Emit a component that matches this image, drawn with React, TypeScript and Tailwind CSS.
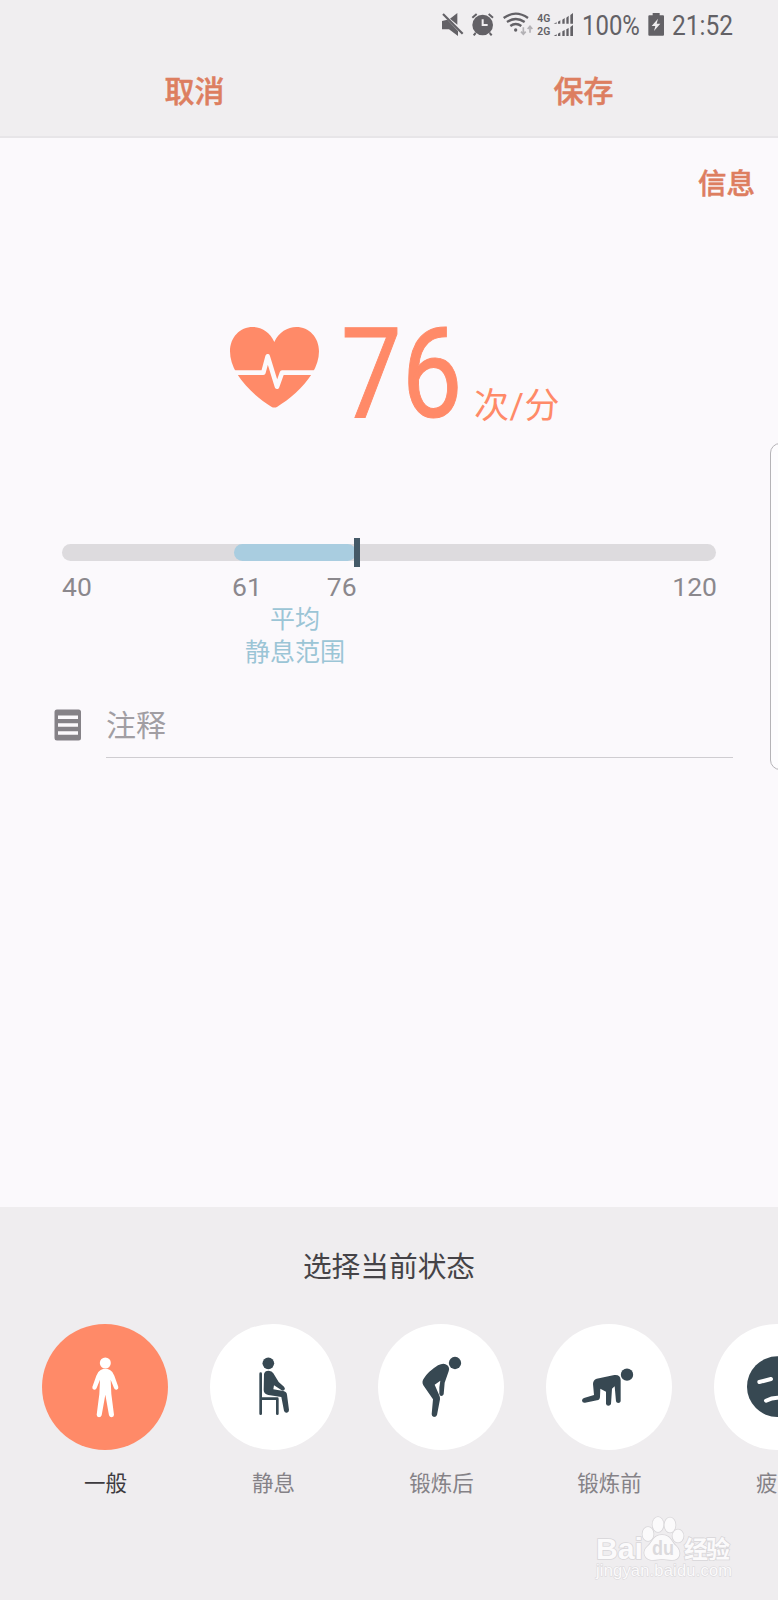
import { useState } from "react";
import type { ReactNode } from "react";

type Status = {
  id: string;
  label: string;
  icon: ReactNode;
};

const MIN = 40;
const MAX = 120;

const statuses: Status[] = [
  {
    id: "general",
    label: "一般",
    icon: (
      <>
        <circle cx="190" cy="117" r="16.5" />
        <path d="M176 138Q190 131 204 138Q212 142 217 155L229 189Q230 196 224 197Q218 198 216 192L206 167L208 210L216 272Q216 279 209 280Q203 280 201 274L190 212L179 274Q177 280 171 280Q164 279 164 272L172 210L174 167L164 192Q162 198 156 197Q150 196 151 189L163 155Q168 142 176 138Z" />
      </>
    ),
  },
  {
    id: "resting",
    label: "静息",
    icon: (
      <>
        <circle cx="175" cy="118" r="17.5" />
        <path d="M162 150Q164 140 176 140Q186 140 190 148L206 174L222 188Q227 193 223 198Q219 201 214 198L192 184L190 196L220 201Q230 203 231 212L237 258Q237 265 231 266Q224 267 222 260L214 219L175 213Q161 210 161 198Z" />
        <path d="M152 149V269M152 224H202V269" fill="none" stroke="currentColor" strokeWidth="8" strokeLinecap="round" strokeLinejoin="round" />
      </>
    ),
  },
  {
    id: "after",
    label: "锻炼后",
    icon: (
      <>
        <circle cx="231" cy="117" r="18.5" />
        <path d="M180 124Q198 115 208 124Q216 131 212 142L200 176L197 211Q195 216 190 216Q185 216 184 210L184 190L187 170L170 182L183 212Q187 219 186 226L177 273Q175 279 168 279Q161 278 161 271L165 226L136 184Q130 174 138 163Q150 143 180 124Z" />
      </>
    ),
  },
  {
    id: "before",
    label: "锻炼前",
    icon: (
      <>
        <circle cx="243" cy="152" r="18.5" />
        <path d="M152 164L205 153Q223 151 224 168L224 232Q223 237 217 237Q211 237 210 232L206 187L198 194L195 240Q193 245 187 245Q181 245 180 239L180 203L163 194L162 218Q162 227 153 229L117 236Q109 237 108 230Q108 224 114 222L144 213L141 180Q141 168 152 164Z" />
      </>
    ),
  },
  {
    id: "tired",
    label: "疲劳",
    icon: (
      <>
        <circle cx="190" cy="188" r="91" />
        <path d="M136 174L171 165M209 165L244 174M156 230Q190 212 224 230" fill="none" stroke="white" strokeWidth="12" strokeLinecap="round" />
      </>
    ),
  },
];

function StatusBar() {
  return (
    <div className="flex h-[48px] items-center pl-[441px] text-[#636166]">
      <svg className="h-[27px] w-[23px] shrink-0" viewBox="33 30 69 81" fill="currentColor">
        <path d="M36 60L52 56L84 90V105L57 85H36ZM60 53L82 36V71Z" />
        <path d="M39 39L98 98" stroke="currentColor" strokeWidth="6.5" />
      </svg>
      <svg className="ml-[7px] h-[27px] w-[23px] shrink-0" viewBox="123 30 69 81" fill="none" stroke="currentColor">
        <circle cx="158" cy="72" r="31" fill="currentColor" stroke="none" />
        <path d="M127 50L140 39M176 39L189 50M137 96L131 103M179 96L185 103" strokeWidth="6" />
        <path d="M158 55V72H173" stroke="#f0eef0" strokeWidth="6" />
      </svg>
      <svg className="ml-[8px] h-[27px] w-[32px] shrink-0" viewBox="216 30 96 81" fill="none" stroke="currentColor">
        <path d="M221 51Q257 25 294 51M231 63Q257 45 284 63M241 75Q257 63 274 75" strokeWidth="7" />
        <circle cx="257" cy="87" r="5" fill="currentColor" stroke="none" />
        <path d="M280 79V100M273 92L280 100L287 92M300 95V76M293 84L300 76L307 84" stroke="#b3b1b5" strokeWidth="5" />
      </svg>
      <svg className="ml-[3px] h-[27px] w-[37px] shrink-0" viewBox="321 30 111 81" fill="currentColor">
        <text x="322" y="63" fontSize="33" fontWeight="600" fontFamily="Roboto, sans-serif" textLength="39" lengthAdjust="spacingAndGlyphs">4G</text>
        <text x="322" y="103" fontSize="33" fontWeight="600" fontFamily="Roboto, sans-serif" textLength="39" lengthAdjust="spacingAndGlyphs">2G</text>
        <path d="M371 68L380 64V68ZM384 62L391 58V68H384ZM397 56L404 51V68H397ZM409 50L416 44V68H409ZM421 42L429 36V68H421Z" />
        <path d="M371 105L380 100V105ZM384 98L391 94V105H384ZM397 91L404 87V105H397ZM409 85L416 81V105H409ZM421 78L429 72V105H421Z" />
      </svg>
      <div className="ml-[8px] w-[66px] shrink-0 pt-[3px]">
        <p className="origin-left scale-x-[0.84] whitespace-nowrap text-[28.5px] leading-[48px]">100%</p>
      </div>
      <svg className="h-[24px] w-[17px] shrink-0" viewBox="654 34 51 72">
        <path d="M655 47Q655 44 658 44H668V37H689V44H699Q702 44 702 47V102Q702 105 699 105H658Q655 105 655 102Z" fill="currentColor" />
        <path d="M684 54L665 76H676L672 91L691 69H680Z" fill="#f0eef0" />
      </svg>
      <p className="ml-[7px] origin-left scale-x-[0.86] pt-[3px] whitespace-nowrap text-[28.5px] leading-[48px]">21:52</p>
    </div>
  );
}

function Header() {
  return (
    <header className="h-[138px] border-b-2 border-[#e7e5e8] bg-[#f0eef0]">
      <StatusBar />
      <div className="grid grid-cols-2 text-center text-[30px] leading-[87px] font-medium text-[#dd7e60] [-webkit-text-stroke:0.5px_#dd7e60]">
        <button type="button">取消</button>
        <button type="button">保存</button>
      </div>
    </header>
  );
}

function HeartRate({ value }: { value: number }) {
  return (
    <div className="flex h-[120px] pl-[230px] text-[#ff8a68]">
      <svg className="mt-[17px] h-[81px] w-[89px] shrink-0" viewBox="60 51 267 243">
        <path d="M193 96C180 67 154 51 128 51C90 51 60 82 60 124C60 146 67 168 80 190C108 234 150 270 184 290Q193 295 202 290C236 270 279 234 307 190C320 168 327 146 327 124C327 82 297 51 259 51C233 51 206 67 193 96Z" fill="currentColor" />
        <path d="M56 188H160L173 139L201 230L216 188H332" fill="none" stroke="#fbf9fc" strokeWidth="14" strokeLinejoin="round" />
      </svg>
      <div className="ml-[22px] w-[133px] shrink-0">
        <p className="origin-left scale-x-[0.85] text-[127px] leading-[128px] [-webkit-text-stroke:1px_#ff8a68]">{value}</p>
      </div>
      <p className="mt-[71px] whitespace-nowrap text-[35px] leading-[52px] tracking-[0.5px]">次/分</p>
    </div>
  );
}

function RangeBar({ low, value }: { low: number; value: number }) {
  const pos = (n: number) => ((n - MIN) / (MAX - MIN)) * 100;

  return (
    <div className="mx-[62px]">
      <div className="relative h-[17px] rounded-full bg-[#dddbde]">
        <div
          className="absolute h-[17px] rounded-full bg-[#a9cde0]"
          style={{ left: `${pos(low)}%`, width: `${pos(value) - pos(low)}%` }}
        />
        <div className="absolute -top-[6px] left-[291.5px] h-[29px] w-[6px] bg-[#455a68]" />
      </div>
      <div className="mt-[10px] flex text-[26.5px] leading-[31px] text-[#8b888d]">
        <span className="w-[170px]">{MIN}</span>
        <span>{low}</span>
        <span className="ml-[65px]">{value}</span>
        <span className="-mr-px ml-auto">{MAX}</span>
      </div>
      <div className="mt-px ml-[170px] w-[126px] text-center text-[25px] leading-[33px] whitespace-nowrap text-[#9bc5d6]">
        <p>平均</p>
        <p>静息范围</p>
      </div>
    </div>
  );
}

function Note() {
  return (
    <div className="mt-[35px] flex pl-[54px]">
      <svg className="mt-[5px] h-[32px] w-[27px] shrink-0" viewBox="0 0 27 32">
        <rect x="0.5" y="0.5" width="26.5" height="31" rx="2.5" fill="#858287" />
        <path d="M4 8.3H24M4 16H24M4 24H24" stroke="#fbf9fc" strokeWidth="3.4" />
      </svg>
      <div className="ml-[25px] h-[54px] w-[627px] border-b border-[#cfcdd1] text-[30px] leading-[44px] text-[#a19ea3]">
        注释
      </div>
    </div>
  );
}

function Watermark() {
  return (
    <svg
      className="absolute right-[42px] bottom-[14px] h-[74px] w-[144px] [paint-order:stroke]"
      viewBox="0 0 144 74"
      fill="#fbfafb"
      stroke="#d8d6d9"
      strokeWidth="1.6"
    >
      <text x="4" y="47" fontSize="30" fontWeight="700" fontFamily="Liberation Sans, sans-serif" textLength="47" lengthAdjust="spacingAndGlyphs">Bai</text>
      <ellipse cx="56" cy="22" rx="5.5" ry="7" />
      <ellipse cx="66" cy="12.5" rx="5.5" ry="7.5" />
      <ellipse cx="78" cy="13" rx="5.5" ry="7.5" />
      <ellipse cx="86" cy="24" rx="5.5" ry="6.5" />
      <path d="M70 23C61 23 61 30 56 34C49 40 53 48 61 48C65 48 67 47 70 47C73 47 76 48 80 48C88 48 90 40 84 34C79 30 79 23 70 23Z" />
      <text x="60" y="43" fontSize="20" fontWeight="700" fill="#dcdadd" stroke="none" fontFamily="Liberation Sans, sans-serif" textLength="22" lengthAdjust="spacingAndGlyphs">du</text>
      <text x="92" y="46" fontSize="24" fontWeight="700" fontFamily="Noto Sans CJK SC, sans-serif" textLength="46">经验</text>
      <text x="4" y="64" fontSize="16.5" strokeWidth="1" fontFamily="Liberation Sans, sans-serif" textLength="136">jingyan.baidu.com</text>
    </svg>
  );
}

export default function App() {
  const [selected, setSelected] = useState("general");

  return (
    <div className="relative flex h-[1600px] w-[778px] flex-col overflow-hidden bg-[#fbf9fc] font-['Roboto','Noto_Sans_CJK_SC',sans-serif]">
      <Header />

      <main className="flex-1">
        <div className="flex justify-end pt-[25px] pr-[23px]">
          <button
            type="button"
            className="text-[28.5px] leading-[44px] font-medium text-[#dd7e60] [-webkit-text-stroke:0.5px_#dd7e60]"
          >
            信息
          </button>
        </div>
        <div className="mt-[103px]">
          <HeartRate value={76} />
        </div>
        <div className="mt-[114px]">
          <RangeBar low={61} value={76} />
        </div>
        <Note />
      </main>

      <section className="h-[393px] bg-[#efedef]">
        <h2 className="pt-[38px] text-center text-[28.7px] leading-[44px] text-[#454347]">选择当前状态</h2>
        <div className="mt-[35px] flex gap-[42px] pl-[42px]">
          {statuses.map((s) => {
            const active = s.id === selected;
            return (
              <button key={s.id} type="button" onClick={() => setSelected(s.id)} className="w-[126px] shrink-0">
                <span
                  className={
                    active
                      ? "block h-[126px] rounded-full bg-[#ff8a68] text-white"
                      : "block h-[126px] rounded-full bg-white text-[#374852]"
                  }
                >
                  <svg className="size-[126px]" viewBox="0 0 378 378" fill="currentColor">
                    {s.icon}
                  </svg>
                </span>
                <span
                  className={
                    active
                      ? "mt-[18px] block pl-px text-[21.5px] leading-[32px] text-[#3d3b3f]"
                      : "mt-[18px] block pl-px text-[21.5px] leading-[32px] text-[#858287]"
                  }
                >
                  {s.label}
                </span>
              </button>
            );
          })}
        </div>
      </section>

      {/* edge panel handle */}
      <div className="absolute top-[443px] -right-[12px] h-[327px] w-[20px] rounded-[10px] border border-[#b5b3b7] bg-[#fdfcfe]" />
      <Watermark />
    </div>
  );
}
